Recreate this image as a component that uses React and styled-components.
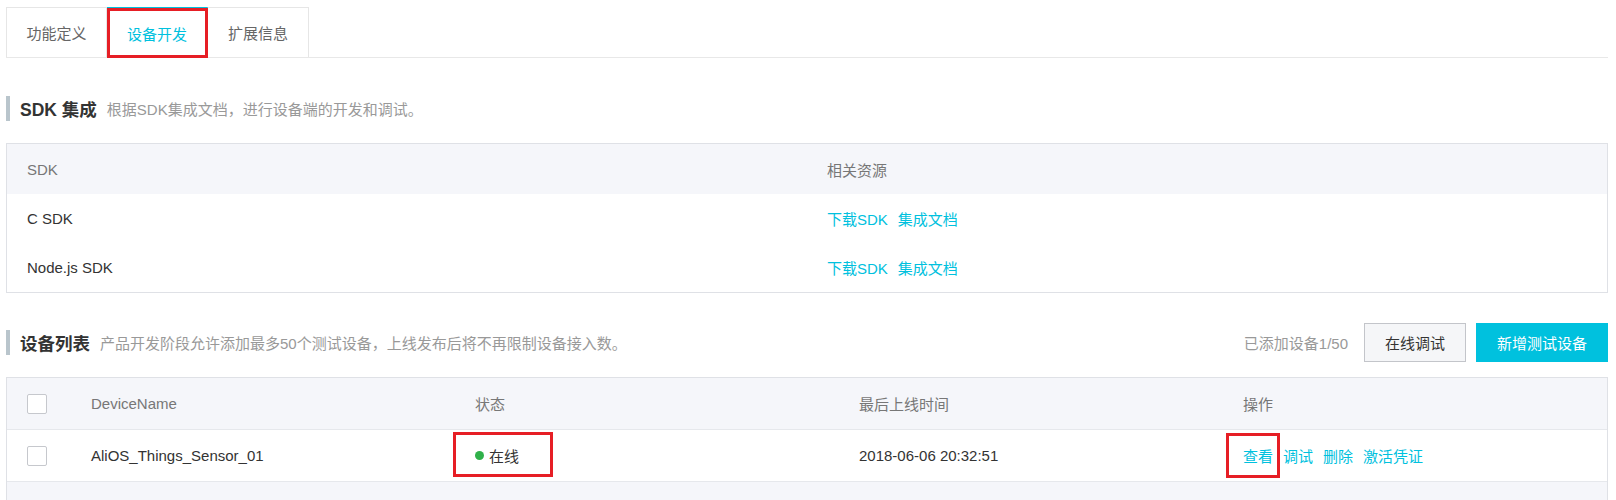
import React from "react";
import styled, { createGlobalStyle } from "styled-components";

const GlobalStyle = createGlobalStyle`
  body {
    margin: 0;
    background: #fff;
    font-family: "Liberation Sans", "Noto Sans CJK SC", sans-serif;
    color: #333;
  }
`;

const CYAN = "#00c1de";
const RED = "#e61e25";

const Page = styled.div`
  padding: 7px 8px 0 6px;
`;

const TabBar = styled.div`
  display: flex;
  border-bottom: 1px solid #e8e8e8;
`;

const Tab = styled.div`
  position: relative;
  width: 101px;
  height: 50px;
  display: flex;
  align-items: center;
  justify-content: center;
  font-size: 15px;
  box-sizing: border-box;
  border: 1px solid #e6e6e6;
  border-bottom: none;
  border-left: ${p => (p.first ? "1px solid #e6e6e6" : "none")};
  border-top: ${p => (p.active ? `2px solid ${CYAN}` : "1px solid #e6e6e6")};
  color: ${p => (p.active ? CYAN : "#666")};
  background: #fff;
`;

const RedBox = styled.span`
  position: absolute;
  left: ${p => p.left}px;
  top: ${p => p.top}px;
  width: ${p => p.w}px;
  height: ${p => p.h}px;
  border: 3px solid ${RED};
  box-sizing: border-box;
  pointer-events: none;
`;

const SectionHead = styled.div`
  display: flex;
  align-items: center;
  height: ${p => p.h || 25}px;
  margin-top: ${p => p.mt}px;
`;

const Bar = styled.span`
  width: 4px;
  height: 25px;
  background: #b9c5cc;
  margin-right: 10px;
`;

const Title = styled.span`
  font-size: 17.5px;
  font-weight: bold;
  color: #333;
`;

const Sub = styled.span`
  font-size: 15px;
  color: #999;
  margin-left: 10px;
`;

const HeadRight = styled.div`
  margin-left: auto;
  display: flex;
  align-items: center;
  gap: 10px;
`;

const Count = styled.span`
  font-size: 15px;
  color: #999;
  margin-right: 6px;
`;

const Button = styled.button`
  height: 39px;
  padding: 0;
  width: ${p => p.w}px;
  font-family: inherit;
  font-size: 15px;
  box-sizing: border-box;
  border: 1px solid ${p => (p.primary ? CYAN : "#c3c5ca")};
  background: ${p => (p.primary ? CYAN : "#f5f6f8")};
  color: ${p => (p.primary ? "#fff" : "#333")};
`;

const Table = styled.div`
  margin-top: ${p => p.mt}px;
  border: 1px solid #dfe1e6;
  border-bottom: ${p => (p.open ? "none" : "1px solid #dfe1e6")};
`;

const Row = styled.div`
  display: grid;
  grid-template-columns: ${p => p.cols};
  align-items: center;
  height: ${p => p.h}px;
  font-size: 15px;
  background: ${p => (p.head ? "#f5f6fa" : "#fff")};
  color: ${p => (p.head ? "#777" : "#333")};
  border-bottom: ${p => (p.line ? "1px solid #e6e8ec" : "none")};
`;

const Cell = styled.div`
  position: relative;
  padding-left: 20px;
  display: flex;
  align-items: center;
  height: 100%;
  gap: 10px;
`;

const Link = styled.a`
  color: ${CYAN};
  text-decoration: none;
  cursor: pointer;
`;

const Check = styled.span`
  width: 20px;
  height: 20px;
  box-sizing: border-box;
  border: 1px solid #c6c8cd;
  border-radius: 2px;
  background: #fff;
`;

const Dot = styled.span`
  width: 9px;
  height: 9px;
  border-radius: 50%;
  background: #30b14a;
  margin-right: -5px;
`;

const Footer = styled.div`
  height: 24px;
  background: #f5f6fa;
`;

const SDK_COLS = "1fr 1fr";
const DEV_COLS = "64px 1fr 1fr 1fr 1fr";

export default function App() {
  return (
    <Page>
      <GlobalStyle />
      <TabBar>
        <Tab first>功能定义</Tab>
        <Tab active>
          设备开发
          <RedBox left={0} top={-1} w={101} h={50} />
        </Tab>
        <Tab>扩展信息</Tab>
      </TabBar>

      <SectionHead mt={38}>
        <Bar />
        <Title>SDK 集成</Title>
        <Sub>根据SDK集成文档，进行设备端的开发和调试。</Sub>
      </SectionHead>

      <Table mt={22}>
        <Row head cols={SDK_COLS} h={50}>
          <Cell>SDK</Cell>
          <Cell>相关资源</Cell>
        </Row>
        {["C SDK", "Node.js SDK"].map(name => (
          <Row key={name} cols={SDK_COLS} h={49}>
            <Cell>{name}</Cell>
            <Cell>
              <Link>下载SDK</Link>
              <Link>集成文档</Link>
            </Cell>
          </Row>
        ))}
      </Table>

      <SectionHead mt={30} h={39}>
        <Bar />
        <Title>设备列表</Title>
        <Sub>产品开发阶段允许添加最多50个测试设备，上线发布后将不再限制设备接入数。</Sub>
        <HeadRight>
          <Count>已添加设备1/50</Count>
          <Button w={102}>在线调试</Button>
          <Button primary w={132}>新增测试设备</Button>
        </HeadRight>
      </SectionHead>

      <Table mt={15} open>
        <Row head line cols={DEV_COLS} h={51}>
          <Cell><Check /></Cell>
          <Cell>DeviceName</Cell>
          <Cell>状态</Cell>
          <Cell>最后上线时间</Cell>
          <Cell>操作</Cell>
        </Row>
        <Row line cols={DEV_COLS} h={51}>
          <Cell><Check /></Cell>
          <Cell>AliOS_Things_Sensor_01</Cell>
          <Cell>
            <Dot />
            在线
            <RedBox left={-2} top={2} w={100} h={45} />
          </Cell>
          <Cell>2018-06-06 20:32:51</Cell>
          <Cell>
            <Link>查看</Link>
            <Link>调试</Link>
            <Link>删除</Link>
            <Link>激活凭证</Link>
            <RedBox left={3} top={3} w={54} h={45} />
          </Cell>
        </Row>
        <Footer />
      </Table>
    </Page>
  );
}
